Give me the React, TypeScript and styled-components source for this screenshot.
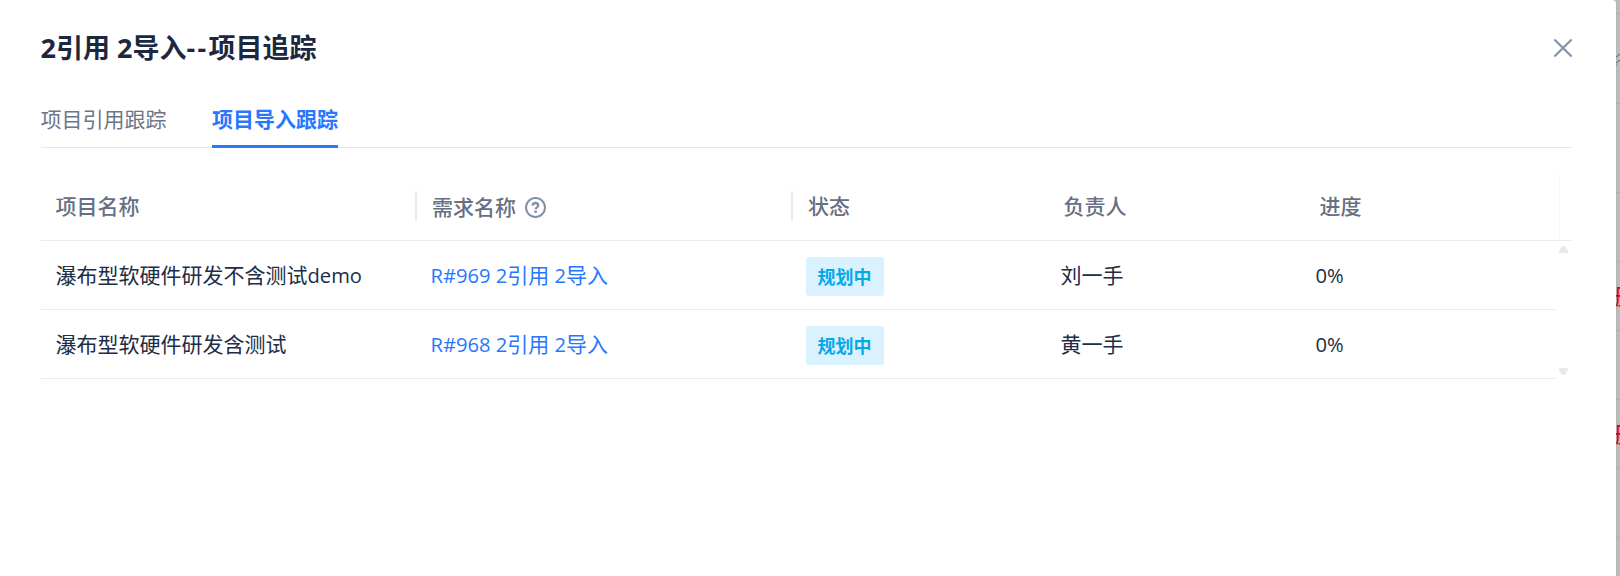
import React from 'react';
import styled, { createGlobalStyle, css } from 'styled-components';

const Global = createGlobalStyle`
  * { box-sizing: border-box; }
  body {
    margin: 0;
    overflow: hidden;
    background: #bdbdbd;
    font-family: "Noto Sans CJK SC", "Open Sans", sans-serif;
    font-size: 21px;
    line-height: 30px;
    color: #202d40;
  }
`;

const Screen = styled.div`
  display: flex;
  width: 1620px;
  height: 576px;
  background: #bdbdbd;
`;

const Dialog = styled.section`
  width: 1616px;
  flex: none;
  padding: 0 45px 0 41px;
  background: #fff;
  border-top-right-radius: 4px;
`;

const Header = styled.header`
  display: flex;
  justify-content: space-between;
  align-items: center;
  height: 96px;
`;

const Title = styled.h1`
  margin: 0 0 2px -0.5px;
  font-size: 27px;
  line-height: 40px;
  font-weight: 700;
  color: #1c2740;
  white-space: pre;
`;

const CloseButton = styled.button`
  display: flex;
  padding: 0;
  margin-right: -2px;
  border: 0;
  background: none;
`;

const Tabs = styled.nav`
  display: flex;
  gap: 45px;
  height: 52px;
  border-bottom: 1px solid #e6e6e6;
`;

const Tab = styled.span<{ $active?: boolean }>`
  width: 126px;
  height: 52px;
  padding-top: 7px;
  white-space: nowrap;
  text-indent: -0.5px;
  color: #6b7688;
  ${(p) =>
    p.$active &&
    css`
      color: #2777ff;
      font-weight: 700;
      text-indent: 0;
      border-bottom: 3px solid #2777ff;
    `}
`;

const Table = styled.div`
  margin-top: 24px;
`;

const columns = '375px 376px 256px 255px 1fr';

const HeadRow = styled.div`
  display: grid;
  grid-template-columns: ${columns} 12px;
  align-items: center;
  height: 69px;
  border-bottom: 1px solid #ebebeb;
`;

const HeadCell = styled.div<{ $divider?: boolean; $indent?: number }>`
  display: flex;
  align-items: center;
  gap: 9px;
  height: 30px;
  padding-left: ${(p) => p.$indent ?? 15}px;
  margin-left: ${(p) => (p.$divider ? '-1px' : '0')};
  border-left: ${(p) => (p.$divider ? '2px solid #ebebeb' : '0')};
  font-weight: 500;
  color: #667082;
`;

const HeadLabel = styled.span`
  height: 33px;
`;

const HelpIcon = styled.svg`
  margin-top: 2px;
`;

const Gutter = styled.div`
  height: 68px;
  border-left: 1px solid #f9f9f9;
`;

const Body = styled.div`
  display: flex;
  justify-content: space-between;
`;

const Rows = styled.div`
  width: 1515px;
`;

const Row = styled.div`
  display: grid;
  grid-template-columns: ${columns};
  align-items: center;
  height: 69px;
  border-bottom: 1px solid #ebebeb;
`;

const Cell = styled.div<{ $link?: boolean; $indent?: number }>`
  padding: 0 0 3px ${(p) => p.$indent ?? 14.5}px;
  white-space: pre;
  color: ${(p) => (p.$link ? '#2777ff' : '#202d46')};
`;

const Tag = styled.span`
  display: block;
  width: 78px;
  height: 39px;
  margin-top: 5px;
  padding-left: 11.5px;
  border-radius: 3px;
  background: #d9f2fd;
  color: #06a8e8;
  font-size: 18px;
  line-height: 39px;
  font-weight: 700;
`;

const LatinRun = styled.span<{ $dash: boolean }>`
  font-family: "Open Sans", sans-serif;
  font-size: 0.96em;
  line-height: 1;
  letter-spacing: ${(p) => (p.$dash ? '2.3px' : '0')};

  ${Title} & {
    font-size: 1em;
  }
`;

const ScrollTrack = styled.div`
  display: flex;
  flex-direction: column;
  justify-content: space-between;
  width: 12px;
  height: 138px;
  padding: 5px 0 4px;
`;

const Backdrop = styled.aside`
  position: relative;
  width: 4px;
  overflow: hidden;
  background: linear-gradient(90deg, #b5b5b5, #c0c0c0);
`;

const BackLine = styled.i<{ $top: number }>`
  position: absolute;
  top: ${(p) => p.$top}px;
  left: 0;
  width: 4px;
  height: 1px;
  background: #adadad;
`;

const BackAction = styled.span<{ $top: number }>`
  position: absolute;
  top: ${(p) => p.$top}px;
  left: -1px;
  color: #d8001c;
  font-weight: 500;
`;

const BackIcon = styled.svg`
  position: absolute;
  top: 52px;
  left: 0;
`;

/** Sets Latin letters, digits and dashes in the interface's Latin face. */
function Mixed({ children }: { children: string }) {
  return (
    <>
      {children
        .split(/(-+|[\x20-\x2c\x2e-\x7e]+)/)
        .filter(Boolean)
        .map((part, i) =>
          /[\x20-\x7e]/.test(part) ? (
            <LatinRun key={i} $dash={part.startsWith('-')}>{part}</LatinRun>
          ) : (
            part
          ),
        )}
    </>
  );
}

const items = [
  { name: '瀑布型软硬件研发不含测试demo', need: 'R#969 2引用 2导入', state: '规划中', owner: '刘一手', progress: '0%' },
  { name: '瀑布型软硬件研发含测试', need: 'R#968 2引用 2导入', state: '规划中', owner: '黄一手', progress: '0%' },
];

export default function App() {
  return (
    <Screen>
      <Global />
      <Dialog>
        <Header>
          <Title><Mixed>2引用 2导入--项目追踪</Mixed></Title>
          <CloseButton aria-label="关闭">
            <svg width="20" height="20" viewBox="0 0 20 20" fill="none" stroke="#8291a9" strokeWidth="2.1">
              <path d="M1.4 1.4 18.6 18.6M18.6 1.4 1.4 18.6" />
            </svg>
          </CloseButton>
        </Header>
        <Tabs>
          <Tab>项目引用跟踪</Tab>
          <Tab $active>项目导入跟踪</Tab>
        </Tabs>
        <Table>
          <HeadRow>
            <HeadCell $indent={14.5}><HeadLabel>项目名称</HeadLabel></HeadCell>
            <HeadCell $divider>
              需求名称
              <HelpIcon width="21" height="21" viewBox="0 0 21 21" fill="none" stroke="#8291a9" strokeWidth="2.1">
                <circle cx="10.5" cy="10.5" r="9.5" />
                <path strokeWidth="2.4" d="M7.7 8.7c0-1.7 1.1-2.7 2.8-2.7s2.7 1 2.7 2.4c0 1.9-2.6 2-2.6 3.9M10.6 13.6v2.4" />
              </HelpIcon>
            </HeadCell>
            <HeadCell $divider><HeadLabel>状态</HeadLabel></HeadCell>
            <HeadCell $indent={15.5}><HeadLabel>负责人</HeadLabel></HeadCell>
            <HeadCell $indent={16.5}><HeadLabel>进度</HeadLabel></HeadCell>
            <Gutter />
          </HeadRow>
          <Body>
            <Rows>
              {items.map((it) => (
                <Row key={it.name}>
                  <Cell><Mixed>{it.name}</Mixed></Cell>
                  <Cell $link $indent={14.5}><Mixed>{it.need}</Mixed></Cell>
                  <Cell $indent={14}><Tag>{it.state}</Tag></Cell>
                  <Cell $indent={12.5}>{it.owner}</Cell>
                  <Cell $indent={12.5}><Mixed>{it.progress}</Mixed></Cell>
                </Row>
              ))}
            </Rows>
            <ScrollTrack>
              <svg width="9" height="7" fill="#e8e9e9"><path d="M3 0h3l3 5v2H0V5z" /></svg>
              <svg width="9" height="7" fill="#e8e9e9"><path d="M0 0h9v2L6 7H3L0 2z" /></svg>
            </ScrollTrack>
          </Body>
        </Table>
      </Dialog>
      <Backdrop>
        {[13, 103, 192, 261, 330, 399, 468, 537].map((y) => <BackLine key={y} $top={y} />)}
        <BackIcon width="4" height="14" fill="none">
          <path d="M0 5 4 2M0 11 4 8" stroke="#53627e" />
          <path d="M0 12v2" stroke="#3696cc" />
        </BackIcon>
        <BackAction $top={280}>删</BackAction>
        <BackAction $top={418}>删</BackAction>
      </Backdrop>
    </Screen>
  );
}
